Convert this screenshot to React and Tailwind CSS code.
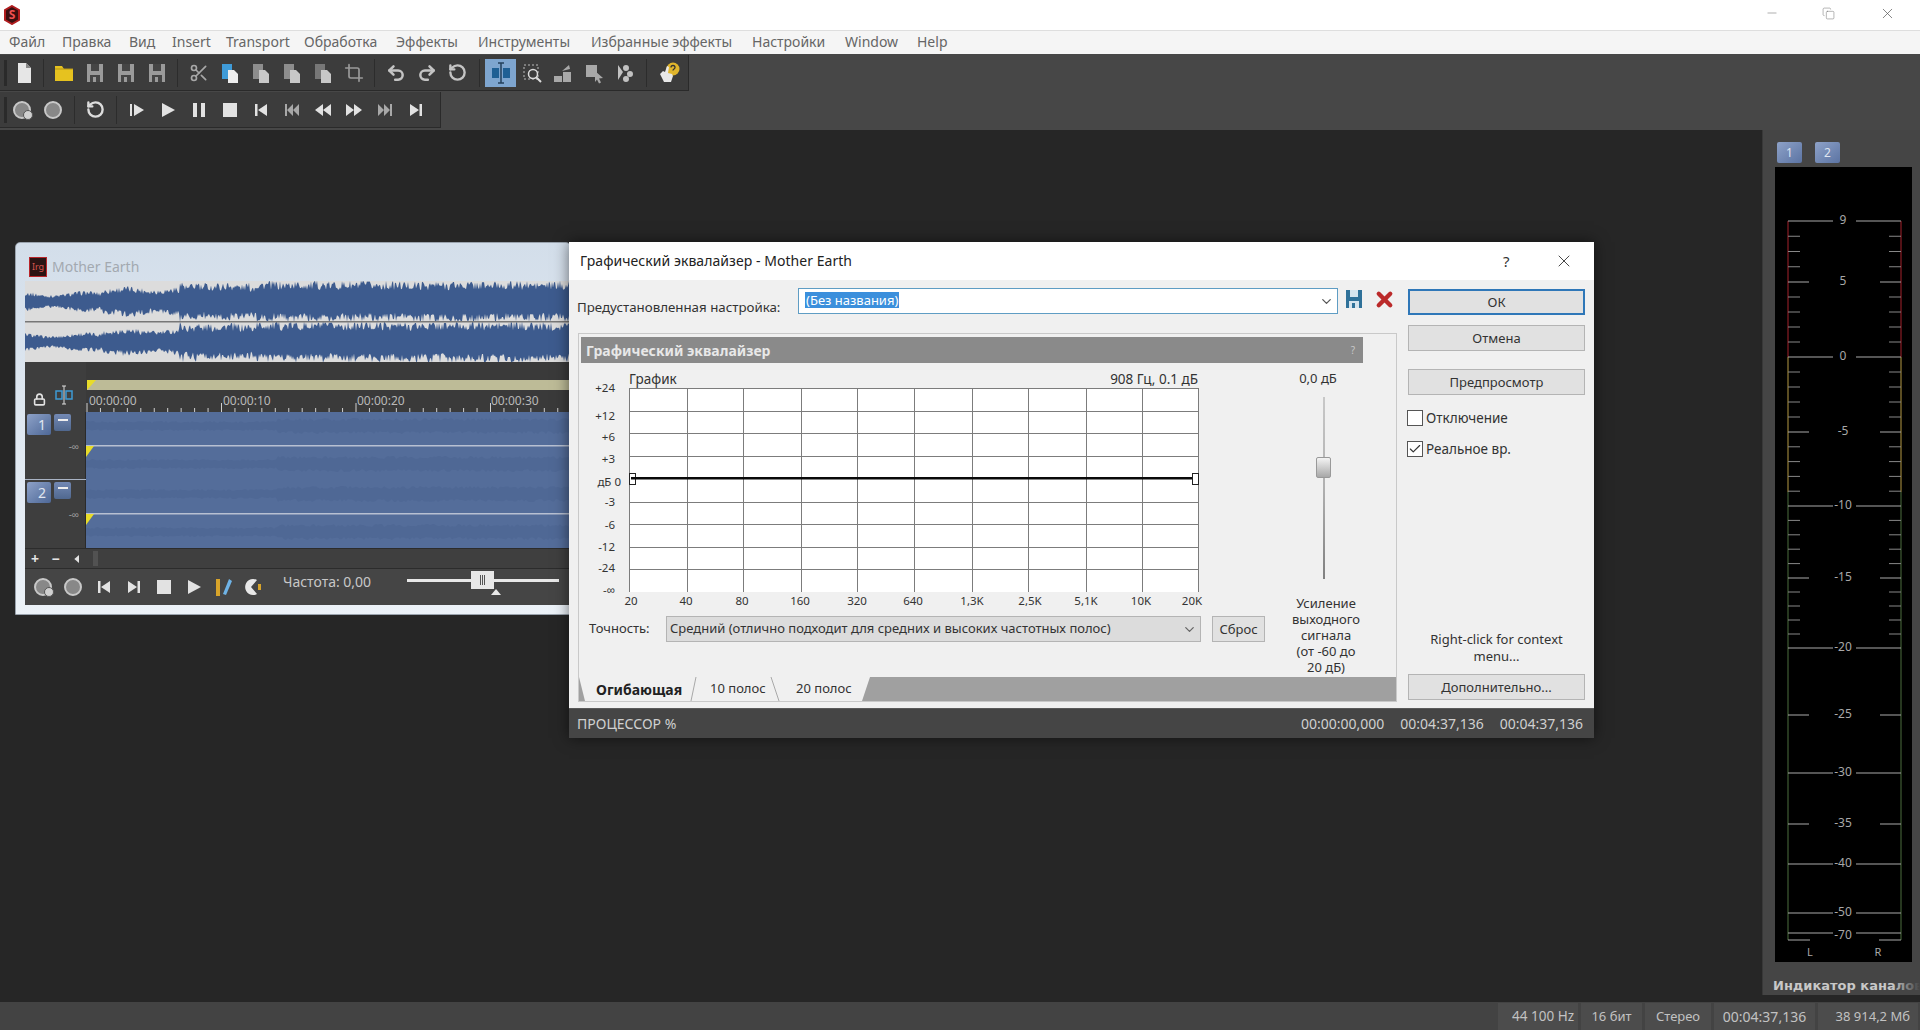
import React from 'react';
import { Scissors, Crop, Undo2, Redo2, RotateCcw, Lock, Minus, X, Copy, ChevronDown, Check } from 'lucide-react';

const menu = [
  ['Файл', 'w-[53px]'],
  ['Правка', 'w-[67px]'],
  ['Вид', 'w-[43px]'],
  ['Insert', 'w-[54px]'],
  ['Transport', 'w-[78px]'],
  ['Обработка', 'w-[92px]'],
  ['Эффекты', 'w-[82px]'],
  ['Инструменты', 'w-[113px]'],
  ['Избранные эффекты', 'w-[161px]'],
  ['Настройки', 'w-[93px]'],
  ['Window', 'w-[72px]'],
  ['Help', 'w-[50px]'],
];

const rnd = (seed) => {
  const v = Math.sin(seed * 127.1 + 311.7) * 43758.5453;
  return v - Math.floor(v);
};

// builds a closed path around a centre line, amp() gives the envelope for x
const wavePath = (x0, x1, cy, amp, seed, step = 1, floor = 0.62) => {
  const top = [];
  const bottom = [];
  for (let x = x0; x <= x1; x += step) {
    const a = amp(x);
    top.push(`${x},${(cy - a * (floor + (1 - floor) * rnd(x + seed))).toFixed(1)}`);
    bottom.push(`${x},${(cy + a * (floor + (1 - floor) * rnd(x * 1.7 + seed + 9))).toFixed(1)}`);
  }
  return `M${top.join('L')}L${bottom.reverse().join('L')}Z`;
};

const Doc = ({ c = '#e6e6e6' }) => (
  <svg width="20" height="22" viewBox="0 0 20 22"><path d="M4 1h8l5 5v15H4z" fill={c} /><path d="M12 1v5h5" fill="#888" /></svg>
);
const Folder = () => (
  <svg width="22" height="20" viewBox="0 0 22 20"><path d="M2 3h7l2 3h9v12H2z" fill="#e6c21f" /><path d="M2 6h18" stroke="#b8971a" /></svg>
);
const Floppy = ({ c = '#9a9a9a', bg = '#454545' }) => (
  <svg width="20" height="22" viewBox="0 0 20 22"><path d="M2 2h16v18H2z" fill={c} /><path d="M6 2h8v7H6zM5 13h10v7H5z" fill={bg} /><path d="M8 15h3v5H8z" fill={c} /></svg>
);
const Clip = ({ c = '#8d8d8d', blue }) => (
  <svg width="20" height="22" viewBox="0 0 20 22"><path d="M2 2h10v15H2z" fill={blue ? '#3f9bd8' : c} /><path d="M8 8h6l4 4v9H8z" fill={blue ? '#eee' : '#c8c8c8'} /></svg>
);
const Tri = ({ d, c = '#e2e2e2', s = 18 }) => (
  <svg width={s} height={s} viewBox="0 0 18 18"><path d={d} fill={c} /></svg>
);
const RecBtn = ({ small }) => (
  <svg width="22" height="22" viewBox="0 0 22 22">
    <circle cx="10" cy="11" r="8" fill="#888" stroke="#c8c8c8" strokeWidth="2" />
    {small && <circle cx="16" cy="16" r="4.5" fill="#d0d0d0" stroke="#555" />}
  </svg>
);
const SwatchIcon = ({ d, c = '#a8a8a8' }) => (
  <svg width="22" height="22" viewBox="0 0 22 22"><path d={d} fill={c} /></svg>
);

const playFrom = 'M2 3h2v12H2zM6 3l10 6-10 6z';
const play = 'M3 2l13 7-13 7z';
const pause = 'M3 2h4v14H3zM11 2h4v14h-4z';
const stop = 'M2 2h14v14H2z';
const first = 'M3 3h2.5v12H3zM15 3v12L6 9z';
const last = 'M3 3v12l9-6zM12.500 3H15v12h-2.500z';
const rew = 'M2 3h2v12H2zM10 3v12L4 9zM16 3v12l-6-6z';
const back = 'M9 3v12L1 9zM17 3v12L9 9z';
const fwd = 'M1 3v12l8-6zM9 3v12l8-6z';
const end = 'M2 3v12l6-6zM8 3v12l6-6zM14 3h2v12h-2z';

const ToolBtn = ({ children, active, narrow }) => (
  <div className={`${narrow ? 'w-[30px]' : 'w-[31px]'} h-[28px] flex items-center justify-center ${active ? 'bg-[#7ea5cf]' : ''}`}>{children}</div>
);
const Sep = ({ w = 'w-[11px]' }) => (
  <div className={`${w} h-[28px] flex justify-center`}><div className="w-px h-full bg-[#2c2c2c]" /></div>
);

const Toolbar = () => (
  <div className="bg-[#474747] h-[76px] flex flex-col gap-[1px] pt-[1px]">
    <div className="w-[689px] h-[36px] bg-[#3c3c3c] border-r border-b border-[#2a2a2a] flex items-center pl-[8px] relative">
      <div className="absolute left-[4px] top-[5px] w-[3px] h-[26px] bg-[#2a2a2a]" />
      <ToolBtn><Doc /></ToolBtn>
      <Sep w="w-[9px]" />
      <ToolBtn><Folder /></ToolBtn>
      <ToolBtn><Floppy /></ToolBtn>
      <ToolBtn><Floppy /></ToolBtn>
      <ToolBtn><Floppy /></ToolBtn>
      <Sep />
      <ToolBtn><Scissors size={20} className="text-[#a8a8a8]" /></ToolBtn>
      <ToolBtn><Clip blue /></ToolBtn>
      <ToolBtn><Clip /></ToolBtn>
      <ToolBtn><Clip /></ToolBtn>
      <ToolBtn><Clip c="#777" /></ToolBtn>
      <ToolBtn><Crop size={20} className="text-[#9a9a9a]" /></ToolBtn>
      <Sep />
      <ToolBtn><Undo2 size={20} strokeWidth={3} className="text-[#c4c4c4]" /></ToolBtn>
      <ToolBtn><Redo2 size={20} strokeWidth={3} className="text-[#c4c4c4]" /></ToolBtn>
      <ToolBtn><RotateCcw size={19} strokeWidth={3} className="text-[#c4c4c4]" /></ToolBtn>
      <Sep w="w-[12px]" />
      <ToolBtn active>
        <svg width="24" height="22" viewBox="0 0 24 22"><path d="M3 6h7v10H3zM14 6h7v10h-7z" fill="#1f5f94" /><path d="M12 1v20M9 1h6M9 21h6" stroke="#24405c" strokeWidth="1.500" /></svg>
      </ToolBtn>
      <ToolBtn>
        <svg width="22" height="22" viewBox="0 0 22 22" fill="none"><path d="M3 3h14v14H3z" stroke="#bbb" strokeDasharray="2 2" /><circle cx="12" cy="12" r="4.500" stroke="#dcdcdc" strokeWidth="1.500" /><path d="M15 15l5 5" stroke="#dcdcdc" strokeWidth="2" /></svg>
      </ToolBtn>
      <ToolBtn><SwatchIcon d="M2 14h8v6H2zM11 10h8v10h-8zM10 9l7-6 1 4z" /></ToolBtn>
      <ToolBtn><SwatchIcon d="M3 3h11v12H3zM12 9l8 7-4 .5 2 4-2 1-2-4-2 2.500z" /></ToolBtn>
      <ToolBtn><SwatchIcon d="M4 3l5 7-5 8zM12 3a3 3 0 110 6 3 3 0 010-6zM16 9a3 3 0 110 6 3 3 0 010-6zM12 14a3 3 0 110 6 3 3 0 010-6z" c="#c2c2c2" /></ToolBtn>
      <Sep w="w-[13px]" />
      <ToolBtn>
        <svg width="24" height="24" viewBox="0 0 24 24">
          <circle cx="16" cy="8" r="6.500" fill="#e0b52c" />
          <path d="M3 13l3-3 2 1 2-6 2 1-1 6 4 1 1 2-2 6H7z" fill="#e8e8e8" />
          <path d="M14 6.500a2 2 0 014 0c0 1.500-2 1.500-2 3" stroke="#333" strokeWidth="1.300" fill="none" />
        </svg>
      </ToolBtn>
    </div>
    <div className="w-[441px] h-[36px] bg-[#3c3c3c] border-r border-b border-[#2a2a2a] flex items-center pl-[7px] relative">
      <div className="absolute left-[4px] top-[5px] w-[3px] h-[26px] bg-[#2a2a2a]" />
      <ToolBtn><RecBtn small /></ToolBtn>
      <ToolBtn><RecBtn /></ToolBtn>
      <Sep />
      <ToolBtn><RotateCcw size={19} strokeWidth={3} className="text-[#dcdcdc]" /></ToolBtn>
      <Sep w="w-[10px]" />
      <ToolBtn><Tri d={playFrom} /></ToolBtn>
      <ToolBtn><Tri d={play} /></ToolBtn>
      <ToolBtn><Tri d={pause} /></ToolBtn>
      <ToolBtn><Tri d={stop} /></ToolBtn>
      <ToolBtn><Tri d={first} /></ToolBtn>
      <ToolBtn><Tri d={rew} c="#a8a8a8" /></ToolBtn>
      <ToolBtn><Tri d={back} /></ToolBtn>
      <ToolBtn><Tri d={fwd} /></ToolBtn>
      <ToolBtn><Tri d={end} c="#a8a8a8" /></ToolBtn>
      <ToolBtn><Tri d={last} /></ToolBtn>
    </div>
  </div>
);

const Overview = () => {
  const amp = (loud, quiet) => (x) => {
    if (x < 102) return quiet * (0.8 + 0.2 * Math.sin(x / 11));
    if (x < 180) return quiet + 3 + 1.500 * Math.sin(x / 9);
    if (x < 256) return loud * (0.8 + 0.2 * rnd(Math.floor(x / 5)));
    return loud - 1 * rnd(Math.floor(x / 9));
  };
  return (
    <svg className="block shrink-0" width="545" height="81" viewBox="25 281 545 81">
      <rect x="25" y="281" width="545" height="81" fill="#dcdcdc" />
      <path d={wavePath(25, 570, 301.500, amp(21, 11), 3, 1, 0.55)} fill="#3d5b8e" />
      <path d={wavePath(25, 570, 342, amp(21, 10), 41, 1, 0.55)} fill="#3d5b8e" />
      <rect x="25" y="321" width="545" height="1.500" fill="#777" />
    </svg>
  );
};

const Ruler = () => {
  const ticks = [];
  for (let i = 0; i < 37; i++) {
    const x = 87 + i * 13.45;
    ticks.push(<path key={i} d={`M${x} ${i % 10 === 0 ? 403 : 408}V412`} stroke="#cfcfcf" />);
  }
  return (
    <svg className="block" width="484" height="50" viewBox="86 362 484 50">
      <rect x="86" y="362" width="484" height="50" fill="#3a3a3a" />
      <rect x="87" y="380" width="483" height="10" fill="#bdbb97" />
      <path d="M87 380h9l-9 10z" fill="#e8dc2a" />
      {ticks}
      {[['00:00:00', 89], ['00:00:10', 223], ['00:00:20', 357], ['00:00:30', 491]].map(([t, x]) => (
        <text key={t} x={x} y="405" fontSize="12" fill="#b8b8b8">{t}</text>
      ))}
    </svg>
  );
};

const TrackBtn = ({ n }) => (
  <div className="flex items-start gap-[3px] pl-[2px] pt-[2px]">
    <div className="w-[24px] h-[21px] rounded-[2px] bg-gradient-to-br from-[#8ea2c8] to-[#4e6897] text-[#e0e6f0] text-[14px] leading-[21px] text-right pr-[5px]">{n}</div>
    <div className="w-[17px] h-[17px] rounded-[2px] bg-gradient-to-b from-[#7389b4] to-[#50688f] flex justify-center pt-[5px]"><div className="w-[10px] h-[2px] bg-[#eee]" /></div>
  </div>
);

const Track = ({ n, seed, bottomLine }) => (
  <div className={`flex h-[68px] ${bottomLine ? 'border-b border-[#a9b3c4]' : ''}`}>
    <div className="w-[61px] shrink-0 bg-[#3e3e3e] border-r border-[#2a2a2a] relative">
      <TrackBtn n={n} />
      <span className="absolute right-[6px] top-[27px] text-[10px] text-[#9a9a9a]">-∞</span>
    </div>
    <svg className="block" width="484" height="68" viewBox="0 0 484 68">
      <rect width="484" height="68" fill="#546d9a" />
      <path d={wavePath(0, 484, 14, (x) => (x > 190 ? 8 : 5), seed, 2)} fill="#4f6895" />
      <path d={wavePath(0, 484, 52, (x) => (x > 190 ? 8 : 5), seed + 5, 2)} fill="#4f6895" />
      <rect y="33" width="484" height="1.500" fill="#b7c0d2" />
      <path d="M0 34h8l-8 11z" fill="#e8dc2a" />
    </svg>
  </div>
);

const ChildWindow = () => (
  <div className="absolute left-[15px] top-[242px] w-[556px] h-[373px] rounded-t-[5px] border border-[#9aa3ad] bg-gradient-to-b from-[#d3deea] to-[#ecf2f8] pl-[9px] overflow-hidden">
    <div className="h-[38px] flex items-center gap-[5px] pl-[4px] pt-[9px]">
      <div className="w-[18px] h-[20px] bg-[#2a1414] border border-[#b8252a] text-[9px] leading-[18px] text-center text-[#d8554f]">Irg</div>
      <span className="text-[14px] text-[#a3a9b0]">Mother Earth</span>
    </div>
    <Overview />
    <div className="flex h-[50px]">
      <div className="w-[61px] shrink-0 bg-[#3e3e3e] flex items-end pb-[6px] pl-[8px] gap-[9px]">
        <Lock size={13} strokeWidth={3} className="text-[#e2e2e2]" />
        <svg width="18" height="22" viewBox="0 0 18 22" fill="none"><path d="M1 7h6v8H1zM11 7h6v8h-6z" stroke="#3e9bd5" strokeWidth="1.500" /><path d="M9 2v18M7 2h4M7 20h4" stroke="#ddd" /></svg>
      </div>
      <Ruler />
    </div>
    <Track n="1" seed={7} bottomLine />
    <Track n="2" seed={19} />
    <div className="h-[20px] bg-[#3f3f3f] border-t border-[#2c2c2c] flex items-center text-[#e4e4e4]">
      <span className="w-[20px] text-center text-[14px] font-bold leading-none">+</span>
      <span className="w-[21px] text-center text-[14px] font-bold leading-none">−</span>
      <span className="w-[22px] flex justify-center"><Tri d="M12 3v12L5 9z" s={12} /></span>
      <div className="ml-[5px] w-[5px] h-[15px] bg-[#525252]" />
    </div>
    <div className="h-[37px] bg-[#454545] border-t border-[#2c2c2c] flex items-center pl-[4px]">
      <div className="flex">
        <ToolBtn narrow><RecBtn small /></ToolBtn>
        <ToolBtn narrow><RecBtn /></ToolBtn>
        <ToolBtn narrow><Tri d={first} /></ToolBtn>
        <ToolBtn narrow><Tri d={last} /></ToolBtn>
        <ToolBtn narrow><Tri d={stop} /></ToolBtn>
        <ToolBtn narrow><Tri d={play} /></ToolBtn>
        <ToolBtn narrow>
          <svg width="22" height="22" viewBox="0 0 22 22"><path d="M3 3h4v17H3z" fill="#d8a42a" /><path d="M10 18l6-15 3 2-6 14z" fill="#6fb3e6" /></svg>
        </ToolBtn>
        <ToolBtn narrow>
          <svg width="22" height="22" viewBox="0 0 22 22"><path d="M14 4a8 8 0 100 14l-6-7z" fill="#e8e8e8" /><path d="M15 8h3v6h-3z" fill="#d8a42a" /></svg>
        </ToolBtn>
      </div>
      <span className="ml-[14px] w-[124px] mb-[12px] text-[14px] text-[#c8c8c8]">Частота: 0,00</span>
      <div className="mb-[13px] w-[152px] h-[3px] bg-[#e8e8e8] relative">
        <div className="absolute left-[64px] top-[-8px] w-[23px] h-[18px] bg-[#e8e8e8] flex items-center justify-center gap-px">
          <div className="w-px h-[10px] bg-[#555]" /><div className="w-px h-[10px] bg-[#555]" /><div className="w-px h-[10px] bg-[#555]" />
        </div>
        <div className="absolute left-[84px] top-[10px] w-0 h-0 border-x-[5px] border-x-transparent border-b-[6px] border-b-[#e8e8e8]" />
      </div>
    </div>
  </div>
);

const xLines = [629, 687, 743, 801, 857, 914, 972, 1028, 1086, 1142, 1198];
const yLines = [388, 411, 433, 456, 478, 502, 524, 547, 569];
const yLabels = [['+24', 392, 615], ['+12', 420, 615], ['+6', 441, 615], ['+3', 463, 615], ['дБ 0', 486, 621], ['-3', 506, 615], ['-6', 529, 615], ['-12', 551, 615], ['-24', 572, 615], ['-∞', 594, 615]];
const xLabels = [['20', 631], ['40', 686], ['80', 742], ['160', 800], ['320', 857], ['640', 913], ['1,3K', 972], ['2,5K', 1030], ['5,1K', 1086], ['10K', 1141], ['20K', 1192]];

const Graph = () => (
  <svg className="block" width="691" height="253" viewBox="579 363 691 253">
    <rect x="629" y="388" width="569" height="204" fill="#fff" />
    {yLines.map((y) => <path key={y} d={`M629 ${y + 0.5}H1198`} stroke="#7c7c7c" />)}
    {xLines.map((x) => <path key={x} d={`M${x + 0.5} 388V592`} stroke="#7c7c7c" />)}
    <rect x="629" y="477" width="569" height="2.500" fill="#0a0a0a" />
    <rect x="629.500" y="473.500" width="6" height="11" fill="#fff" stroke="#222" />
    <rect x="1192.500" y="473.500" width="6" height="11" fill="#fff" stroke="#222" />
    <rect x="631" y="477" width="5" height="2.500" fill="#0a0a0a" />
    <text x="629" y="384" fontSize="13.500" fill="#333">График</text>
    <text x="1198" y="384" fontSize="13.500" fill="#333" textAnchor="end">908 Гц, 0.1 дБ</text>
    {yLabels.map(([t, y, x]) => <text key={t} x={x} y={y} fontSize="11.500" fill="#333" textAnchor="end">{t}</text>)}
    {xLabels.map(([t, x]) => <text key={t} x={x} y="604.500" fontSize="11.500" fill="#333" textAnchor="middle">{t}</text>)}
  </svg>
);

const DlgBtn = ({ children, primary, className = '' }) => (
  <div className={`h-[26px] flex items-center justify-center pt-[1px] bg-[#e1e1e1] text-[13px] text-[#333] ${primary ? 'border-2 border-[#2f77b8]' : 'border border-[#b4b4b4]'} ${className}`}>{children}</div>
);

const Tabs = () => (
  <div className="h-[24px] bg-[#a0a0a0] relative flex items-center">
    <svg className="absolute left-0 top-0" width="300" height="24" viewBox="0 0 300 24">
      <path d="M0 0H291L283 24H6Z" fill="#f0f0f0" />
      <path d="M117 0L112 24M192 0L200 24" stroke="#a8a8a8" />
    </svg>
    <span className="relative ml-[17px] w-[114px] text-[14px] font-bold text-[#222]">Огибающая</span>
    <span className="relative w-[86px] text-[13px] text-[#333]">10 полос</span>
    <span className="relative text-[13px] text-[#333]">20 полос</span>
  </div>
);

const Dialog = () => (
  <div className="absolute left-[569px] top-[242px] w-[1025px] h-[496px] flex flex-col shadow-[0_0_14px_rgba(0,0,0,0.55)]">
    <div className="h-[38px] bg-white flex items-center pl-[11px] pb-[2px] text-[14px] tracking-[0.05px] text-[#222] relative">
      Графический эквалайзер - Mother Earth
      <span className="absolute left-[934px] top-[8px] text-[15px] text-[#333]">?</span>
      <X size={20} strokeWidth={1} className="absolute left-[985px] top-[9px] text-[#222]" />
    </div>
    <div className="flex-1 bg-[#f0f0f0] flex">
      <div className="w-[839px] shrink-0">
        <div className="flex h-[34px] items-start pt-[8px]">
          <span className="pl-[8px] w-[229px] pt-[11px] text-[13.3px] leading-[16px] text-[#333]">Предустановленная настройка:</span>
          <div className="w-[540px] h-[26px] bg-white border border-[#5f9dc4] flex items-center pl-[6px] pb-[3px] relative">
            <span className="bg-[#3b8fdc] text-white text-[13px] leading-[16px] px-px">(Без названия)</span>
            <ChevronDown size={15} className="absolute right-[3px] top-[5px] text-[#555]" />
          </div>
          <div className="ml-[6px] w-[20px]"><Floppy c="#2f7199" bg="#d5e4ee" /></div>
          <X size={23} strokeWidth={4.500} className="ml-[9px] text-[#bb2a2a]" />
        </div>
        <div className="ml-[9px] mt-[19px] w-[819px] h-[369px] border border-[#c9c9c9] flex flex-col">
          <div className="ml-[2px] mt-[3px] w-[782px] h-[26px] shrink-0 bg-[#8a8a8a] flex items-center justify-between pl-[5px] pr-[8px] pt-[1px]">
            <span className="text-[14px] font-bold text-[#e8e8e8]">Графический эквалайзер</span>
            <span className="text-[10px] text-[#c8c8c8]">?</span>
          </div>
          <div className="flex-1 flex">
            <div className="w-[691px] shrink-0">
              <Graph />
              <div className="flex items-center h-[26px]">
                <span className="ml-[10px] w-[77px] text-[13px] text-[#333]">Точность:</span>
                <div className="w-[535px] h-[26px] bg-[#dcdcdc] border border-[#b4b4b4] flex items-center justify-between pl-[3px] pr-[3px] text-[13px] text-[#333]">
                  Средний (отлично подходит для средних и высоких частотных полос)
                  <ChevronDown size={15} className="text-[#666]" />
                </div>
                <DlgBtn className="ml-[11px] w-[53px]">Сброс</DlgBtn>
              </div>
            </div>
            <div className="w-[110px] flex flex-col items-center pt-[7px] text-[13px] leading-[16px] text-[#333]">
              <span className="mr-[14px]">0,0 дБ</span>
              <div className="mt-[11px] mr-[2px] w-[2px] h-[182px] bg-gradient-to-b from-[#c8c8c8] via-[#b0b0b0] to-[#808080] relative">
                <div className="absolute left-[-7px] top-[60px] w-[15px] h-[21px] rounded-[2px] border border-[#999] bg-gradient-to-b from-[#f4f4f4] to-[#a8a8a8]" />
              </div>
              <p className="mt-[16px] ml-[2px] w-[84px] text-center">Усиление<br />выходного<br />сигнала<br />(от -60 до<br />20 дБ)</p>
            </div>
          </div>
          <Tabs />
        </div>
      </div>
      <div className="flex-1 flex flex-col pt-[9px] pr-[9px]">
        <DlgBtn primary>ОК</DlgBtn>
        <DlgBtn className="mt-[10px]">Отмена</DlgBtn>
        <DlgBtn className="mt-[18px]">Предпросмотр</DlgBtn>
        <label className="mt-[15px] -ml-[1px] flex items-center gap-[3px] text-[13.5px] leading-[16px] text-[#333]">
          <span className="w-[16px] h-[16px] bg-white border border-[#555]" />Отключение
        </label>
        <label className="mt-[15px] -ml-[1px] flex items-center gap-[3px] text-[13.5px] leading-[16px] text-[#333]">
          <span className="w-[16px] h-[16px] bg-white border border-[#555] flex items-center justify-center"><Check size={14} className="text-[#333]" /></span>Реальное вр.
        </label>
        <p className="mt-auto mb-[9px] text-center text-[13px] leading-[17px] text-[#333] px-[20px]">Right-click for context menu...</p>
        <DlgBtn className="mb-[8px]">Дополнительно...</DlgBtn>
      </div>
    </div>
    <div className="h-[30px] bg-[#454545] border-t border-[#5a5a5a] flex items-center pl-[8px] pr-[11px] text-[14px] text-[#d0d0d0]">
      <span className="mr-auto">ПРОЦЕССОР %</span>
      <span>00:00:00,000</span>
      <span className="ml-[16px]">00:04:37,136</span>
      <span className="ml-[16px]">00:04:37,136</span>
    </div>
  </div>
);

const meterLabels = [['9', 221], ['5', 282], ['0', 357], ['-5', 432], ['-10', 506], ['-15', 578], ['-20', 648], ['-25', 715], ['-30', 773], ['-35', 824], ['-40', 864], ['-50', 913], ['-70', 936]];
const longTicks = new Set(['9', '0', '-10', '-20', '-30', '-40', '-50']);

const smallTicks = () => {
  const out = [];
  const ranges = [[221, 282], [282, 357], [357, 432], [432, 506], [506, 578], [578, 648]];
  ranges.forEach(([a, b]) => {
    const n = Math.round((b - a) / 15);
    for (let i = 1; i < n; i++) out.push(a + ((b - a) * i) / n);
  });
  return out;
};

const Meter = () => (
  <svg className="block" width="137" height="795" viewBox="1775 167 137 795">
    <rect x="1775" y="167" width="137" height="795" fill="#000" />
    <path d="M1788 221V357M1901 221V357" stroke="#a5222c" />
    <path d="M1788 357V492M1901 357V492" stroke="#b59a45" />
    <path d="M1788 492V940M1901 492V940" stroke="#4d6e3f" />
    {smallTicks().map((y) => <path key={y} d={`M1788 ${y}h12M1889 ${y}h12`} stroke="#888" />)}
    {meterLabels.filter(([t]) => t !== '-70').map(([t, y]) => {
      const w = longTicks.has(t) ? 45 : 21;
      return <path key={t} d={`M1788 ${y}h${w}M${1901 - w} ${y}h${w}`} stroke="#aaa" />;
    })}
    <path d="M1788 933h45M1856 933h45" stroke="#aaa" />
    <path d="M1788 940h22M1879 940h22" stroke="#aaa" />
    {meterLabels.map(([t, y]) => <text key={t} x="1843" y={y + 3} fontSize="12" fill="#a8a8a8" textAnchor="middle">{t}</text>)}
    <text x="1810" y="956" fontSize="11" fill="#a8a8a8" textAnchor="middle">L</text>
    <text x="1878" y="956" fontSize="11" fill="#a8a8a8" textAnchor="middle">R</text>
  </svg>
);

const MeterBtn = ({ n }) => (
  <div className="w-[25px] h-[21px] rounded-[2px] bg-gradient-to-br from-[#8ea2c8] to-[#5c74a3] text-[#dfe5f0] text-[12px] leading-[21px] text-center">{n}</div>
);

const MeterPanel = () => (
  <div className="absolute left-[1762px] top-0 w-[158px] h-[865px] bg-[#454545] border-l border-[#383838] pl-[12px] overflow-hidden">
    <div className="flex gap-[13px] h-[37px] pl-[2px] pt-[12px]">
      <MeterBtn n="1" />
      <MeterBtn n="2" />
    </div>
    <Meter />
    <div className="pt-[14px] -ml-[2px] text-[13px] font-bold text-[#c8c8c8] whitespace-nowrap [font-family:'DejaVu_Sans',sans-serif]">Индикатор каналов</div>
    <div className="absolute right-0 bottom-0 w-[28px] h-[30px] bg-gradient-to-r from-transparent to-[#454545]" />
  </div>
);

const StatusCell = ({ className = '', children }) => (
  <div className={`h-full flex items-center justify-center bg-[#4c4c4c] text-[#c2c2c2] ${className}`}>{children}</div>
);

export default function App() {
  return (
    <div className="w-[1920px] h-[1030px] overflow-hidden flex flex-col bg-[#262626] [font-family:'Noto_Sans',sans-serif]">
      <div className="h-[30px] shrink-0 bg-white flex items-center relative">
        <svg className="ml-[3px]" width="18" height="20" viewBox="0 0 18 20">
          <path d="M9 1l7 4v10l-7 4-7-4V5z" fill="#3a0f10" stroke="#b01c1e" strokeWidth="2" />
          <text x="9" y="14" fontSize="12" fontWeight="700" fill="#f05050" textAnchor="middle">S</text>
        </svg>
        <Minus size={14} strokeWidth={1} className="absolute left-[1765px] top-[6px] text-[#777]" />
        <Copy size={13} strokeWidth={1} className="absolute left-[1822px] top-[7px] text-[#777]" />
        <X size={17} strokeWidth={1} className="absolute left-[1879px] top-[5px] text-[#555]" />
      </div>
      <div className="h-[24px] shrink-0 bg-[#f5f5f5] border-t border-[#dedede] flex items-center pl-[9px] pb-[2px] text-[14px] text-[#666]">
        {menu.map(([m, w]) => <span key={m} className={`${w} whitespace-nowrap`}>{m}</span>)}
      </div>
      <Toolbar />
      <div className="flex-1 relative">
        <MeterPanel />
      </div>
      <div className="h-[28px] shrink-0 bg-[#434343] flex justify-end gap-[3px] pr-[2px] pt-[1px]">
        <StatusCell className="w-[80px] justify-end pr-[4px] text-[13.5px]">44 100 Hz</StatusCell>
        <StatusCell className="w-[61px] text-[13px]">16 бит</StatusCell>
        <StatusCell className="w-[66px] text-[13px]">Стерео</StatusCell>
        <StatusCell className="w-[101px] text-[14px]">00:04:37,136</StatusCell>
        <StatusCell className="w-[100px] justify-end pr-[8px] text-[13px]">38 914,2 Мб</StatusCell>
      </div>
      <ChildWindow />
      <Dialog />
    </div>
  );
}
